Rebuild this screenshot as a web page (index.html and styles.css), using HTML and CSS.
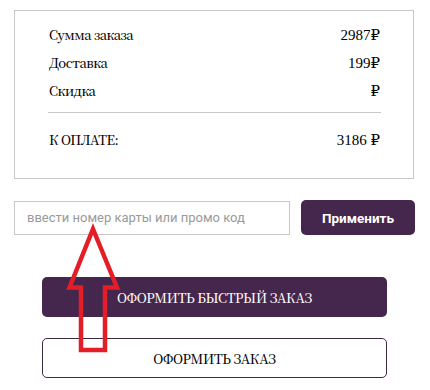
FILE: index.html
```html
<!DOCTYPE html>
<html lang="ru">
<head>
<meta charset="utf-8">
<title>Заказ</title>
<link rel="stylesheet" href="styles.css">
</head>
<body>
<div class="page">
  <div class="summary">
    <div class="row"><span class="label">Сумма заказа</span><span class="value">2987₽</span></div>
    <div class="row"><span class="label">Доставка</span><span class="value">199₽</span></div>
    <div class="row"><span class="label">Скидка</span><span class="value">₽</span></div>
    <div class="divider"></div>
    <div class="row"><span class="label">К ОПЛАТЕ:</span><span class="value">3186 ₽</span></div>
  </div>
  <div class="promo">
    <input class="promo-input" type="text" placeholder="ввести номер карты или промо код">
    <button class="apply">Применить</button>
  </div>
  <div class="actions">
    <button class="btn btn-fast">ОФОРМИТЬ БЫСТРЫЙ ЗАКАЗ</button>
    <button class="btn btn-order">ОФОРМИТЬ ЗАКАЗ</button>
  </div>
  <svg class="arrow" width="430" height="390" viewBox="0 0 430 390">
    <polygon points="93,229 117,287.5 105,287.5 105,350 81,350 81,287.5 69.5,287.5" fill="none" stroke="#e31e26" stroke-width="4.5" stroke-linejoin="miter"/>
  </svg>
</div>
</body>
</html>
```

FILE: styles.css
```css
* { box-sizing: border-box; }
html, body { margin: 0; padding: 0; background: #fff; }
.page {
  position: relative;
  width: 430px;
  height: 390px;
  padding: 10px 0 0 14px;
  color: #000;
}
.summary {
  width: 400px;
  border: 1px solid #c8c8c8;
  padding: 10px 33px 24px 34px;
}
.row {
  display: flex;
  justify-content: space-between;
  align-items: baseline;
  height: 28px;
  line-height: 28px;
}
.label {
  font-family: "Noto Serif CJK SC", "DejaVu Serif", serif;
  font-size: 13px;
  font-weight: 500;
  letter-spacing: -0.5px;
  color: #000;
}
.value {
  font-family: "Liberation Serif", "Noto Serif CJK SC", "DejaVu Serif", serif;
  font-size: 15px;
  color: #000;
}
.divider {
  height: 1px;
  background: #c8c8c8;
  margin: 7px -1px 13px -1px;
}
.promo {
  display: flex;
  align-items: center;
  gap: 11px;
  margin-top: 21px;
  width: 401px;
}
.promo-input {
  width: 276px;
  height: 34px;
  border: 1px solid #c8c8c8;
  border-radius: 0;
  padding: 0 12px;
  font-family: Roboto, "Liberation Sans", Arial, sans-serif;
  font-size: 13px;
  color: #333;
  outline: none;
}
.promo-input::placeholder { color: #9a9a9a; }
.apply {
  width: 114px;
  height: 35px;
  border: none;
  border-radius: 5px;
  background: #45264c;
  color: #fff;
  font-family: Roboto, "Liberation Sans", Arial, sans-serif;
  font-weight: bold;
  font-size: 13.5px;
  padding: 0;
}
.actions {
  display: flex;
  flex-direction: column;
  gap: 21px;
  margin: 42px 0 0 28px;
  width: 345px;
}
.btn {
  height: 40px;
  border-radius: 5px;
  font-family: "Noto Serif CJK SC", "DejaVu Serif", serif;
  font-size: 13px;
  font-weight: 500;
  letter-spacing: -0.3px;
  padding: 0;
}
.btn-fast {
  background: #45264c;
  color: #fff;
  border: none;
}
.btn-order {
  background: #fff;
  color: #000;
  border: 1px solid #3b2a40;
}
.arrow {
  position: absolute;
  left: 0;
  top: 0;
  pointer-events: none;
}
```
